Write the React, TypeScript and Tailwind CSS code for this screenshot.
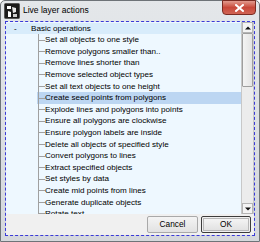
const items = [
  "Set all objects to one style",
  "Remove polygons smaller than..",
  "Remove lines shorter than",
  "Remove selected object types",
  "Set all text objects to one height",
  "Create seed points from polygons",
  "Explode lines and polygons into points",
  "Ensure all polygons are clockwise",
  "Ensure polygon labels are inside",
  "Delete all objects of specified style",
  "Convert polygons to lines",
  "Extract specified objects",
  "Set styles by data",
  "Create mid points from lines",
  "Generate duplicate objects",
  "Rotate text",
];

const AppIcon = () => (
  <svg width="16" height="16" viewBox="0 0 16 16">
    <rect x="0.5" y="0.5" width="15" height="15" rx="1" fill="#1a1a1a" stroke="#555" />
    <path d="M3 3h4v3H3z" fill="#fff" />
    <path d="M8 4l4 1v4l-3 1z" fill="#e8e8e8" />
    <path d="M4 8l3 1v5H4z" fill="#fff" />
    <path d="M9 11h4v3H9z" fill="#cfcfcf" />
  </svg>
);

export default function App() {
  return (
    <div className="w-[260px] h-[242px] bg-white font-['Liberation_Sans',Arial,sans-serif]">
      <div className="w-[260px] h-[242px] flex flex-col border border-[#6e7378] rounded-t-[5px] bg-gradient-to-b from-[#e4e7ea] to-[#d5d8dc]">
        {/* title bar */}
        <div className="h-[20px] flex items-start shrink-0">
          <div className="ml-[3px] mt-[2px]">
            <AppIcon />
          </div>
          <span className="ml-[3px] mt-[4px] text-[8.5px] leading-[11px] text-black">Live layer actions</span>
          <div className="ml-auto mr-[3px] -mt-[1px] w-[34px] h-[15px] rounded-b-[4px] border border-[#7a2b22] bg-gradient-to-b from-[#e19a8e] via-[#c8483a] to-[#d06454] flex items-center justify-center">
            <svg width="9" height="8" viewBox="0 0 9 8">
              <path d="M1 1l7 6M8 1L1 7" stroke="#fff" strokeWidth="2" strokeLinecap="square" />
            </svg>
          </div>
        </div>
        {/* client area */}
        <div className="mx-[4px] h-[215px] border border-dashed border-[#3a3ad8] flex flex-col shrink-0">
          <div className="h-[192px] flex bg-[#eef8ff] overflow-hidden">
            <div className="flex-1 pt-[0.7px] text-[8.1px] text-black overflow-hidden">
              <div className="h-[11.6px] flex items-center bg-[#d8ecfb] leading-[11.6px]">
                <span className="ml-[8px] w-[17px]">-</span>
                <span>Basic operations</span>
              </div>
              {items.map((label, i) => (
                <div key={i} className="h-[11.6px] flex">
                  <div className="w-[31px] shrink-0" />
                  <div className={`flex-1 flex ${i === 5 ? "bg-[#bcd6f2]" : ""}`}>
                    <div className="w-[1px] shrink-0" />
                    <div className="w-[7px] shrink-0 border-l border-[#a0a0a0] flex items-center">
                      <div className="w-[6px] h-[1px] bg-[#a0a0a0]" />
                    </div>
                    <span className="ml-[0px] leading-[11.6px] whitespace-nowrap">{label}</span>
                  </div>
                </div>
              ))}
            </div>
            {/* scrollbar */}
            <div className="w-[13px] shrink-0 flex flex-col border-x border-[#c8c8c8] bg-[#f2f2f2]">
              <div className="h-[11px] border border-[#b5b5b5] bg-[#f4f4f4] flex items-center justify-center">
                <svg width="6" height="4" viewBox="0 0 6 4">
                  <path d="M0 3.5L3 0.5L6 3.5z" fill="#111" />
                </svg>
              </div>
              <div className="h-[54px] border border-[#9e9e9e] rounded-[1px] bg-gradient-to-r from-[#f4f4f4] to-[#e4e4e4]" />
              <div className="flex-1 bg-[#ececec]" />
              <div className="h-[11px] border border-[#b5b5b5] bg-[#f4f4f4] flex items-center justify-center">
                <svg width="6" height="4" viewBox="0 0 6 4">
                  <path d="M0 0.5L3 3.5L6 0.5z" fill="#111" />
                </svg>
              </div>
            </div>
          </div>
          {/* buttons */}
          <div className="flex-1 bg-[#f0f0f0] flex justify-end items-start pt-[2px] pr-[3px] gap-[3px] text-[8.3px] text-black">
            <div className="w-[51px] h-[17px] border border-[#a9a9a9] rounded-[2px] bg-gradient-to-b from-[#f4f4f4] to-[#e2e2e2] flex items-center justify-center">
              Cancel
            </div>
            <div className="w-[50px] h-[17px] border border-[#3c3c3c] rounded-[2px] p-[1px] flex">
              <div className="flex-1 border border-[#b8b8b8] bg-gradient-to-b from-[#f4f4f4] to-[#e2e2e2] flex items-center justify-center">
                OK
              </div>
            </div>
          </div>
        </div>
      </div>
    </div>
  );
}
